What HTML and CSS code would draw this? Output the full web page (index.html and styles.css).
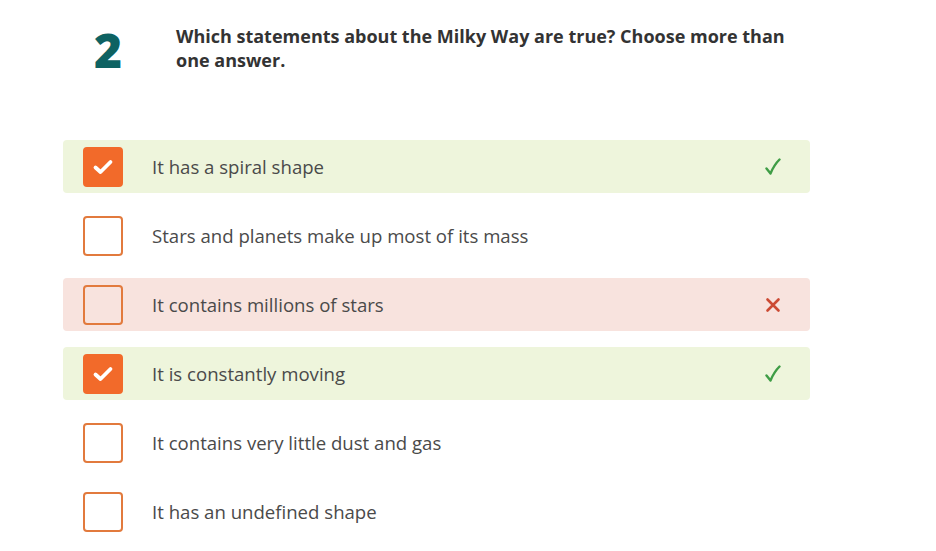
FILE: index.html
```html
<!DOCTYPE html>
<html>
<head>
<meta charset="utf-8">
<link rel="stylesheet" href="styles.css">
</head>
<body>
<div class="quiz">
  <div class="question">
    <div class="qnum">2</div>
    <div class="qtext">Which statements about the Milky Way are true? Choose more than one answer.</div>
  </div>
  <ul class="options">
    <li class="option correct">
      <span class="box checked"><svg viewBox="0 0 22 22" width="22" height="22"><path d="M3.5 11.5 L8.5 16 L18.5 6" fill="none" stroke="#fff" stroke-width="3.8" stroke-linecap="round" stroke-linejoin="round"/></svg></span>
      <span class="label">It has a spiral shape</span>
      <span class="mark ok"><svg viewBox="0 0 16 18" width="16" height="18"><path d="M1.5 10.5 L5.5 15.5 Q9 7 14.5 1.5" fill="none" stroke="#3f9d46" stroke-width="2.4" stroke-linecap="round" stroke-linejoin="round"/></svg></span>
    </li>
    <li class="option">
      <span class="box"></span>
      <span class="label">Stars and planets make up most of its mass</span>
    </li>
    <li class="option wrong">
      <span class="box"></span>
      <span class="label">It contains millions of stars</span>
      <span class="mark bad"><svg viewBox="0 0 16 16" width="16" height="16"><path d="M2.5 2.5 L13.5 13.5 M13.5 2.5 L2.5 13.5" fill="none" stroke="#cc4a33" stroke-width="2.6" stroke-linecap="round"/></svg></span>
    </li>
    <li class="option correct">
      <span class="box checked"><svg viewBox="0 0 22 22" width="22" height="22"><path d="M3.5 11.5 L8.5 16 L18.5 6" fill="none" stroke="#fff" stroke-width="3.8" stroke-linecap="round" stroke-linejoin="round"/></svg></span>
      <span class="label">It is constantly moving</span>
      <span class="mark ok"><svg viewBox="0 0 16 18" width="16" height="18"><path d="M1.5 10.5 L5.5 15.5 Q9 7 14.5 1.5" fill="none" stroke="#3f9d46" stroke-width="2.4" stroke-linecap="round" stroke-linejoin="round"/></svg></span>
    </li>
    <li class="option">
      <span class="box"></span>
      <span class="label">It contains very little dust and gas</span>
    </li>
    <li class="option">
      <span class="box"></span>
      <span class="label">It has an undefined shape</span>
    </li>
  </ul>
</div>
</body>
</html>
```
FILE: styles.css
```css
html, body {
  margin: 0;
  padding: 0;
  background: #ffffff;
}
body {
  font-family: "Open Sans", "Liberation Sans", sans-serif;
  color: #444;
}
.quiz {
  padding: 24px 0 0 63px;
  width: 747px;
}
.question {
  display: flex;
  align-items: flex-start;
  gap: 23px;
}
.qnum {
  width: 90px;
  flex: none;
  text-align: center;
  font-family: "Open Sans", sans-serif;
  font-weight: 800;
  font-size: 48px;
  line-height: 52px;
  color: #0e6262;
}
.qtext {
  font-family: "Open Sans", sans-serif;
  font-weight: 700;
  font-size: 18px;
  line-height: 24px;
  color: #333;
  width: 620px;
}
.options {
  list-style: none;
  margin: 64px 0 0 0;
  padding: 0;
  display: flex;
  flex-direction: column;
  gap: 16px;
}
.option {
  display: flex;
  align-items: center;
  height: 53px;
  padding: 0 20px;
  border-radius: 4px;
  box-sizing: border-box;
}
.option.correct { background: #eef5dc; }
.option.wrong { background: #f8e3de; }
.box {
  width: 40px;
  height: 40px;
  box-sizing: border-box;
  border: 2px solid #e27a3d;
  border-radius: 4px;
  flex: none;
  display: flex;
  align-items: center;
  justify-content: center;
}
.box.checked {
  background: #f26a2a;
  border-color: #f26a2a;
}
.label {
  flex: 1;
  margin-left: 29px;
  font-family: "Open Sans", sans-serif;
  font-size: 18.6px;
  color: #4a4a4a;
}
.mark {
  width: 16px;
  display: flex;
  justify-content: center;
  margin-right: 9px;
}
```
